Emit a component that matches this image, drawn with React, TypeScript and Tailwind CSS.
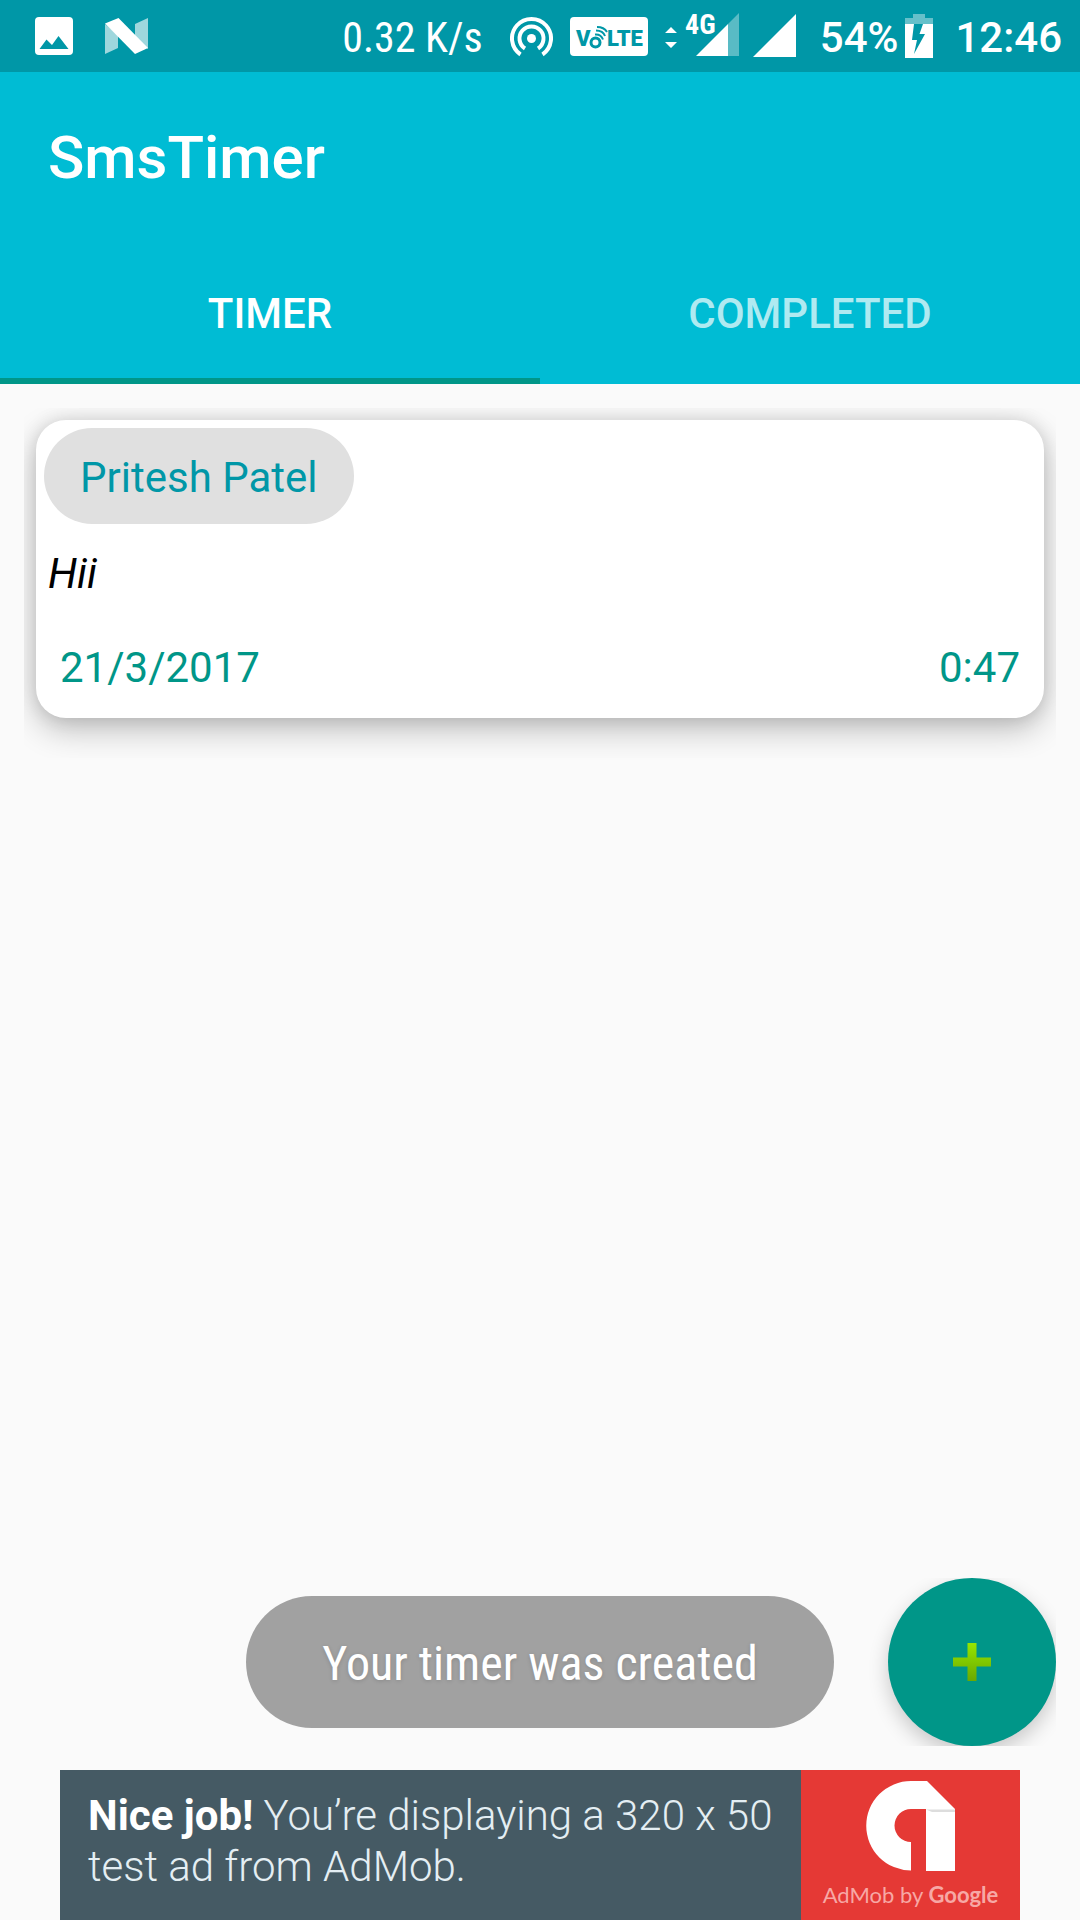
import { useState } from 'react';

const timers = [
  { name: 'Pritesh Patel', message: 'Hii', date: '21/3/2017', time: '0:47' }
];

const tabs = ['Timer', 'Completed'];

const StatusBar = () => (
  <div className="flex h-[72px] items-center justify-between bg-[#0097a7] pl-[35px] pr-[18px] text-[42px] leading-[48px] text-white">
    {/* Notifications */}
    <div className="flex items-center gap-8">
      <svg className="size-[38px]" viewBox="0 0 38 38">
        <rect width="38" height="38" rx="4" fill="#fff" />
        <path d="M4.500 32 11.500 22.500 17 28 23.500 19 33.500 32Z" fill="#0097a7" />
      </svg>
      <svg className="h-[36px] w-[43px]" viewBox="0 0 43 36">
        <path d="M0 6 13 17V30L0 36ZM30 6 43 0V31L30 20Z" fill="#fff" opacity=".62" />
        <path d="M0 5.500 13.500 0 43 30 30 36Z" fill="#fff" />
      </svg>
    </div>

    {/* System icons */}
    <div className="flex items-center">
      <span className="mr-[27px] pt-1 font-['Roboto_Condensed',Roboto,sans-serif]">0.32 K/s</span>
      <svg className="mr-[17px] h-[42px] w-[43px]" viewBox="0 0 43 42" fill="none" stroke="#fff" strokeWidth="4">
        <path d="M10.500 39.500A19.500 19.500 0 1 1 32.500 39.500" />
        <path d="M15 33.500A12 12 0 1 1 28 33.500" />
        <circle cx="21.500" cy="23.500" r="4.500" fill="#fff" stroke="none" />
      </svg>
      <svg className="mr-[17px] h-[39px] w-[78px]" viewBox="0 0 78 39">
        <rect width="78" height="39" rx="4" fill="#fff" />
        <g fill="#0097a7" fontFamily="Roboto, sans-serif" fontWeight="900">
          <text x="6" y="29" fontSize="22">V</text>
          <text x="37" y="29" fontSize="22">LTE</text>
        </g>
        <g fill="none" stroke="#0097a7">
          <circle cx="25.500" cy="25.500" r="4.500" strokeWidth="3" />
          <path d="M25 17.500Q31 17 33 22.500" strokeWidth="2" />
          <path d="M26 13.500Q33 13.500 35 19" strokeWidth="2" />
          <path d="M27 10Q34 10 37 15" strokeWidth="2" />
        </g>
      </svg>
      <svg className="mr-[14px] h-[60px] w-[74px]" viewBox="0 0 74 60" fill="#fff">
        <path d="M0 27 6 21 12 27ZM0 36H12L6 42Z" />
        <path d="M31 50 63 18V50Z" />
        <path d="M63 18 74 7V50H63Z" opacity=".35" />
        <text x="20" y="28" fontSize="28" fontWeight="700" fontFamily="Roboto Condensed, Roboto, sans-serif">4G</text>
      </svg>
      <svg className="mr-6 h-[44px] w-[43px]" viewBox="0 0 43 44">
        <path d="M0 43 43 0V43Z" fill="#fff" />
      </svg>
      <span className="pt-1 font-medium">54%</span>
      <svg className="ml-[7px] mr-[22px] h-[44px] w-[28px]" viewBox="0 0 28 44" fill="#fff">
        <path d="M0 10V4H8V0H20V4H28V10Z" opacity=".4" />
        <path d="M0 10H9L7 26H12L9 40 20 20H14.500L18 10H28V44H0Z" />
      </svg>
      <span className="pt-1 font-medium">12:46</span>
    </div>
  </div>
);

const AdBanner = () => (
  <a href="#ad" className="mx-[60px] flex h-[150px] bg-[#455a64]">
    <p className="flex-1 pl-7 pt-5 text-[42px] font-light leading-[51px] text-[#e4eef3]">
      <strong className="font-bold text-white">Nice job!</strong> You’re displaying a 320 x 50
      <br />
      test ad from AdMob.
    </p>
    <div className="flex w-[219px] flex-col items-center bg-[#e53935] pt-[11px]">
      <svg className="h-[90px] w-[89px]" viewBox="0 0 89 90">
        <path d="M45 89.500A44.700 44.700 0 0 1 45 0H61L89 28H45A16.500 16.500 0 0 0 45 61Z" fill="#fff" />
        <path d="M60 28H89V90H60Z" fill="#fff" />
        <path d="M60 28.500H89V31H66Z" fill="#ddd" />
      </svg>
      <span className="mt-2 font-['Lato',sans-serif] text-[22px] leading-[32px] text-[#f7a8a5]">
        AdMob by <span className="font-bold">Google</span>
      </span>
    </div>
  </a>
);

const App = () => {
  const [activeTab, setActiveTab] = useState('Timer');

  return (
    <div className="flex min-h-screen flex-col bg-[#fafafa] font-['Roboto',sans-serif]">
      <StatusBar />

      {/* App bar */}
      <header className="bg-[#00bcd4] text-white">
        <h1 className="flex h-[168px] items-center px-12 pt-1 text-[60px] font-medium">SmsTimer</h1>
        <nav className="flex h-36">
          {tabs.map((tab) => (
            <button
              key={tab}
              onClick={() => setActiveTab(tab)}
              className={`flex-1 border-b-[6px] pt-2 text-[42px] font-medium uppercase ${
                activeTab === tab ? 'border-[#009688] text-white' : 'border-transparent text-white/70'
              }`}
            >
              {tab}
            </button>
          ))}
        </nav>
      </header>

      <main className="relative flex-1 p-6">
        {/* Timer list */}
        {timers.map((timer) => (
          <div key={timer.date} className="overflow-hidden px-3 pb-10 pt-3">
            <article className="rounded-[30px] bg-white px-2 pb-[26px] pt-2 text-[42px] leading-[48px] shadow-[0_12px_32px_rgba(0,0,0,0.24),0_0_18px_rgba(0,0,0,0.12)]">
              <span className="inline-flex rounded-full bg-[#e0e0e0] px-9 pb-[22px] pt-[26px] text-[#0097a7]">
                {timer.name}
              </span>
              <p className="mt-[26px] px-1 italic text-black">{timer.message}</p>
              <div className="mt-[46px] flex justify-between px-4 text-[#009688]">
                <span>{timer.date}</span>
                <span>{timer.time}</span>
              </div>
            </article>
          </div>
        ))}

        {/* Toast */}
        <div className="pointer-events-none absolute inset-x-0 bottom-[42px] flex justify-center">
          <div
            role="status"
            className="flex h-[132px] items-center rounded-full bg-[#a1a1a1] px-[76px] pt-1 font-['Roboto_Condensed',Roboto,sans-serif] text-[48px] text-white [text-shadow:0_1px_4px_rgba(0,0,0,0.15)]"
          >
            Your timer was created
          </div>
        </div>

        {/* Add button */}
        <div className="absolute bottom-6 right-6 overflow-hidden pl-6">
          <button
            aria-label="Add timer"
            className="flex size-[168px] items-center justify-center rounded-full bg-[#009688] shadow-[0_8px_20px_rgba(0,0,0,0.2)]"
          >
            <svg className="size-[40px]" viewBox="0 0 40 40">
              <defs>
                <linearGradient id="plus" x1="0" y1="0" x2="0" y2="1">
                  <stop offset="0" stopColor="#96e600" />
                  <stop offset="1" stopColor="#6aa800" />
                </linearGradient>
              </defs>
              <path d="M15.500 1H24.500V15.500H39V24.500H24.500V39H15.500V24.500H1V15.500H15.500Z" fill="url(#plus)" />
            </svg>
          </button>
        </div>
      </main>

      <AdBanner />
    </div>
  );
};

export default App;
